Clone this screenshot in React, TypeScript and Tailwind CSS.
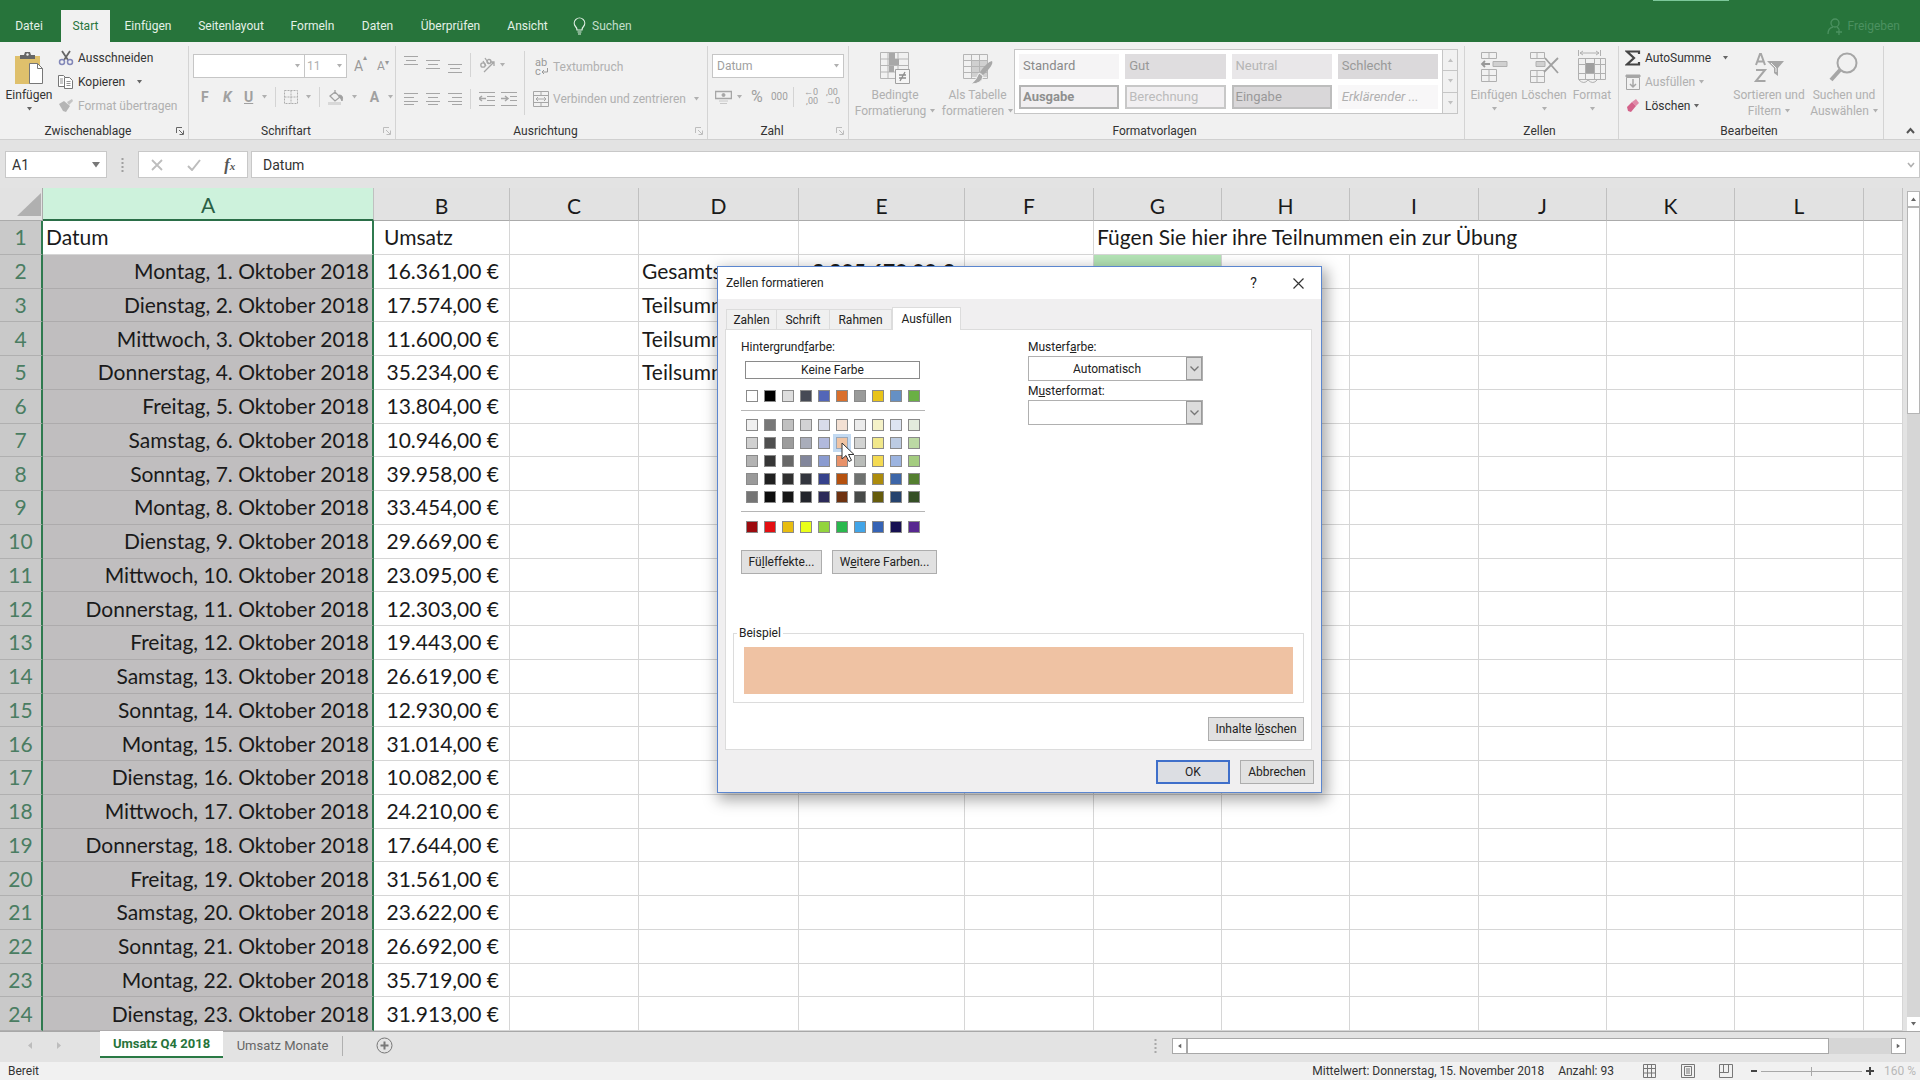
import React from "react";

const dates = [
  ["Montag, 1. Oktober 2018", "16.361,00 €"],
  ["Dienstag, 2. Oktober 2018", "17.574,00 €"],
  ["Mittwoch, 3. Oktober 2018", "11.600,00 €"],
  ["Donnerstag, 4. Oktober 2018", "35.234,00 €"],
  ["Freitag, 5. Oktober 2018", "13.804,00 €"],
  ["Samstag, 6. Oktober 2018", "10.946,00 €"],
  ["Sonntag, 7. Oktober 2018", "39.958,00 €"],
  ["Montag, 8. Oktober 2018", "33.454,00 €"],
  ["Dienstag, 9. Oktober 2018", "29.669,00 €"],
  ["Mittwoch, 10. Oktober 2018", "23.095,00 €"],
  ["Donnerstag, 11. Oktober 2018", "12.303,00 €"],
  ["Freitag, 12. Oktober 2018", "19.443,00 €"],
  ["Samstag, 13. Oktober 2018", "26.619,00 €"],
  ["Sonntag, 14. Oktober 2018", "12.930,00 €"],
  ["Montag, 15. Oktober 2018", "31.014,00 €"],
  ["Dienstag, 16. Oktober 2018", "10.082,00 €"],
  ["Mittwoch, 17. Oktober 2018", "24.210,00 €"],
  ["Donnerstag, 18. Oktober 2018", "17.644,00 €"],
  ["Freitag, 19. Oktober 2018", "31.561,00 €"],
  ["Samstag, 20. Oktober 2018", "23.622,00 €"],
  ["Sonntag, 21. Oktober 2018", "26.692,00 €"],
  ["Montag, 22. Oktober 2018", "35.719,00 €"],
  ["Dienstag, 23. Oktober 2018", "31.913,00 €"],
];

const themeRow = ["#ffffff", "#000000", "#dedede", "#464a55", "#5366b8", "#d96f2c", "#999a99", "#e8c319", "#6590c4", "#6ab044"];
const shadeRows = [
  ["#f0f0f0", "#777777", "#c0c0c0", "#d2d2d4", "#d8dcea", "#f3e0d3", "#ececec", "#f5f2c8", "#dde4f2", "#e3ebdd"],
  ["#d0d0d0", "#4f4f4f", "#9c9c9c", "#a9adba", "#b1b9dc", "#f0c4a3", "#d2d3d2", "#f1e88b", "#bccbe2", "#bcd9a4"],
  ["#b3b3b3", "#363636", "#686868", "#82869b", "#8a9bd0", "#e8926a", "#b9bcb9", "#f4da52", "#9cb4e0", "#a4cc80"],
  ["#9a9a9a", "#202020", "#303030", "#33363e", "#36428c", "#b5510f", "#6f7270", "#ac8b0c", "#3d66a8", "#547f30"],
  ["#757575", "#0d0d0d", "#161616", "#23252c", "#2c2a59", "#6e3210", "#474a48", "#665c0c", "#26436e", "#354f25"],
];
const standardRow = ["#9c0a0e", "#e30f12", "#e8bd10", "#eaff1a", "#93d43e", "#2ab84e", "#42a5e8", "#3563b5", "#171152", "#572790"];

function Caret({ className = "text-[#b0b0b0]" }: { className?: string }) {
  return (
    <svg width="5" height="4" viewBox="0 0 5 4" className={"shrink-0 " + className} aria-hidden="true">
      <path d="M0 0h5L2.5 3.5z" fill="currentColor" />
    </svg>
  );
}

function Launcher({ dim = false }: { dim?: boolean }) {
  return (
    <button aria-label="Weitere Optionen" className={dim ? "text-[#bdbdbd]" : "text-[#666]"}>
      <svg width="8" height="8" viewBox="0 0 8 8" fill="none" stroke="currentColor">
        <path d="M.5 6V.5H6M3 3l4 4M7.5 3.500v4h-4" />
      </svg>
    </button>
  );
}

function Group({ label, width, launcher, children }: { label: string; width: string; launcher?: "on" | "dim"; children: React.ReactNode }) {
  return (
    <section aria-label={label} className={"mt-1 flex flex-col border-r border-[#d4d4d4] " + width}>
      <div className="flex flex-1 pt-px">{children}</div>
      <div className="flex h-4 items-center pr-1">
        <h2 className="flex-1 text-center text-[#333]">{label}</h2>
        {launcher && <Launcher dim={launcher === "dim"} />}
      </div>
    </section>
  );
}

function Lines({ rows, className }: { rows: number[][]; className?: string }) {
  return (
    <svg width="14" height="14" viewBox="0 0 14 14" className={className} stroke="#a6a6a6" aria-hidden="true">
      {rows.map((r) => (
        <path key={r[0]} d={`M${r[1]} ${r[0]}.5H${r[2]}`} />
      ))}
    </svg>
  );
}

const tall = "flex flex-col items-center text-[#b0b0b0]";

function Ribbon() {
  return (
    <div className="flex h-[98px] border-b border-[#d0d0d0] bg-[#f1f1f1] leading-4">
      <Group label="Zwischenablage" width="w-[189px]" launcher="on">
        <button className="flex w-[58px] flex-col items-center pt-1 text-[#333]">
          <svg width="30" height="34" viewBox="0 0 30 34" aria-hidden="true">
            <path d="M1 5h25v28H1z" fill="#dfc06c" />
            <path d="M6 8V4h4l1-3h5l1 3h4v4z" fill="#666" />
            <circle cx="13.500" cy="3.500" r="1.200" fill="#f1f1f1" />
            <path d="M15.500 12.500h8l5 5v15h-13z" fill="#fff" stroke="#777" />
            <path d="M23.500 12.500v5h5" fill="none" stroke="#777" />
          </svg>
          <span className="mt-[2px]">Einfügen</span>
          <Caret className="mt-1 text-[#666]" />
        </button>
        <div className="flex flex-col gap-2 pt-[3px]">
          <button className="flex h-4 items-center gap-1 text-[#333]">
            <svg width="16" height="16" viewBox="0 0 16 16" fill="none" aria-hidden="true">
              <path d="M4 1l6 9M12 1L6 10" stroke="#666" strokeWidth="1.800" />
              <circle cx="4" cy="12" r="2.500" stroke="#8287b8" strokeWidth="1.500" />
              <circle cx="12" cy="12" r="2.500" stroke="#8287b8" strokeWidth="1.500" />
            </svg>
            Ausschneiden
          </button>
          <button className="flex h-4 items-center gap-1 text-[#333]">
            <svg width="16" height="16" viewBox="0 0 16 16" fill="#fff" stroke="#777" aria-hidden="true">
              <path d="M.5 1.500h5l3 3v8h-8z" />
              <path d="M6.500 3.500h5l3 3v8h-8z" />
              <path d="M2 5h3M2 7h3M2 9h3M8.500 7.500h4M8.500 9.500h4M8.500 11.500h4" strokeWidth=".8" />
            </svg>
            Kopieren
            <Caret className="ml-2 text-[#666]" />
          </button>
          <button className="flex h-4 items-center gap-1 text-[#b0b0b0]">
            <svg width="16" height="16" viewBox="0 0 16 16" fill="#b5b5b5" aria-hidden="true">
              <path d="M1 6l5-3 6 5-4 6-3-1z" />
              <path d="M9 4l5-3 1 2-4 4z" fill="#c4c4c4" />
            </svg>
            Format übertragen
          </button>
        </div>
      </Group>

      <Group label="Schriftart" width="w-[207px]" launcher="dim">
        <div className="flex flex-1 flex-col gap-[9px] pt-[7px] pl-1">
          <div className="flex items-center text-[#b0b0b0]">
            <button aria-label="Schriftname" className="flex h-6 w-[112px] items-center justify-end border border-[#c6c6c6] bg-white pr-1">
              <Caret />
            </button>
            <button aria-label="Schriftgrad" className="flex h-6 w-[42px] items-center justify-between border border-l-0 border-[#c6c6c6] bg-white pr-1 pl-[2px]">
              11
              <Caret />
            </button>
            <button className="ml-[7px] flex w-4 text-sm text-[#999]">
              A<span className="-mt-1 text-[8px]">▴</span>
            </button>
            <button className="ml-[7px] flex w-4 items-end text-xs text-[#999]">
              A<span className="mb-[6px] text-[8px]">▾</span>
            </button>
          </div>
          <div className="flex h-5 items-center pl-2 text-sm font-bold text-[#a0a0a0]">
            <button className="w-[22px] text-left">F</button>
            <button className="w-[21px] text-left italic">K</button>
            <button className="w-[18px] text-left underline">U</button>
            <Caret />
            <span className="mx-2 h-5 border-l border-[#d4d4d4]" />
            <button aria-label="Rahmenlinien">
              <svg width="14" height="14" viewBox="0 0 14 14" fill="none" stroke="#adadad">
                <path d="M.5.5h13v13H.5zM7 .5v13M.5 7h13" strokeDasharray="2 1" />
              </svg>
            </button>
            <span className="w-2" />
            <Caret />
            <span className="mx-2 h-5 border-l border-[#d4d4d4]" />
            <button aria-label="Füllfarbe">
              <svg width="16" height="16" viewBox="0 0 16 16" fill="none" stroke="#a0a0a0">
                <path d="M2 7l5-4 5 5-5 4zM7 5V1" strokeWidth="1.300" />
                <path d="M11 6q5 0 3 6-1-3-3-4z" fill="#a0a0a0" />
                <path d="M0 14.500h13" stroke="#d8d8d8" strokeWidth="3" />
              </svg>
            </button>
            <span className="w-2" />
            <Caret />
            <button className="w-[31px] pl-1">A</button>
            <Caret />
          </div>
        </div>
      </Group>

      <Group label="Ausrichtung" width="w-[312px]" launcher="dim">
        <div className="mt-1 mb-2 flex w-[129px] flex-col gap-[14px] border-r border-[#d4d4d4] pt-[2px] pl-2">
          <div className="flex h-6 items-center">
            <Lines className="mb-2 mr-2" rows={[[2, 0, 14], [6, 2, 12], [10, 0, 14]]} />
            <Lines className="mr-2" rows={[[2, 0, 14], [6, 2, 12], [10, 0, 14]]} />
            <Lines className="mt-2" rows={[[2, 0, 14], [6, 2, 12], [10, 0, 14]]} />
            <span className="mx-2 h-6 border-l border-[#d4d4d4]" />
            <svg width="17" height="17" viewBox="0 0 17 17" fill="none" stroke="#a6a6a6" strokeWidth="1.300" className="mr-1" aria-hidden="true">
              <circle cx="4" cy="8" r="2.200" />
              <path d="M4 4l3 5M6 1l4 6M5 15L15 5M15 9V5h-4" />
              <circle cx="10" cy="4.500" r="2" />
            </svg>
            <Caret />
          </div>
          <div className="flex h-4 items-center">
            <Lines className="mr-2" rows={[[1, 0, 14], [5, 0, 10], [9, 0, 14], [12, 0, 10]]} />
            <Lines className="mr-2" rows={[[1, 0, 14], [5, 2, 12], [9, 0, 14], [12, 2, 12]]} />
            <Lines rows={[[1, 0, 14], [5, 4, 14], [9, 0, 14], [12, 4, 14]]} />
            <span className="mx-2 h-5 border-l border-[#d4d4d4]" />
            <svg width="16" height="14" viewBox="0 0 16 14" stroke="#a6a6a6" className="mr-[6px]" aria-hidden="true">
              <path d="M0 .5h16M8 4.500h8M8 8.500h8M0 13.500h16" />
              <path d="M0 6.500h7M3 4L0 6.500 3 9" strokeWidth="1.500" fill="none" />
            </svg>
            <svg width="16" height="14" viewBox="0 0 16 14" stroke="#a6a6a6" aria-hidden="true">
              <path d="M0 .5h16M9 4.500h7M9 8.500h7M0 13.500h16" />
              <path d="M0 6.500h7M4 4l3 2.500L4 9" strokeWidth="1.500" fill="none" />
            </svg>
          </div>
        </div>
        <div className="flex flex-1 flex-col gap-4 pt-3 pl-2 text-[#b0b0b0]">
          <button className="flex h-4 items-center gap-1">
            <span className="flex w-4 flex-col items-start pl-[2px] text-[11px] leading-[9px] text-[#999]">
              <span>ab</span>
              <span className="flex items-center">
                c
                <svg width="7" height="7" viewBox="0 0 7 7" fill="none" stroke="#999" aria-hidden="true"><path d="M6.500 0v4H1M3 2L1 4l2 2" /></svg>
              </span>
            </span>
            Textumbruch
          </button>
          <button className="flex h-4 items-center gap-1">
            <svg width="16" height="16" viewBox="0 0 16 16" fill="none" stroke="#a6a6a6" aria-hidden="true">
              <path d="M.5.5h15v15H.5zM.5 4.500h15M.5 11.500h15M8 .5v4M8 11.500v4M3 8h10M5 6L3 8l2 2M11 6l2 2-2 2" />
            </svg>
            Verbinden und zentrieren
            <Caret className="ml-1 text-[#b0b0b0]" />
          </button>
        </div>
      </Group>

      <Group label="Zahl" width="w-[141px]" launcher="dim">
        <div className="flex flex-1 flex-col gap-[9px] px-1 pt-[7px] text-[#b0b0b0]">
          <button aria-label="Zahlenformat" className="flex h-6 items-center justify-between border border-[#c6c6c6] bg-white px-1 text-[#a0a0a0]">
            Datum
            <Caret />
          </button>
          <div className="flex h-5 items-center pl-[3px] text-[#a0a0a0]">
            <svg width="17" height="15" viewBox="0 0 17 15" fill="none" stroke="#a6a6a6" aria-hidden="true">
              <path d="M.5 1.500h16v7H.5z" strokeWidth="1.500" />
              <circle cx="8.500" cy="5" r="1.500" fill="#a6a6a6" />
              <path d="M4 11h9M5 13.500h7" stroke="#c8c8c8" />
            </svg>
            <span className="w-[5px]" />
            <Caret />
            <button className="ml-[9px] w-5 text-left text-base">%</button>
            <button className="w-[22px] text-left text-[10px]">000</button>
            <span className="mr-2 h-5 border-l border-[#d4d4d4]" />
            <button className="mr-2 w-4 text-right text-[9px] leading-[9px]">←0<br />,00</button>
            <button className="w-4 text-left text-[9px] leading-[9px]">,00<br />→0</button>
          </div>
        </div>
      </Group>

      <Group label="Formatvorlagen" width="flex-1">
        <button className={tall + " w-[92px] pt-1"}>
          <svg width="32" height="34" viewBox="0 0 32 34" fill="none" stroke="#b5b5b5" aria-hidden="true">
            <path d="M1.500 1.500h28v26h-28zM1.500 8h28M1.500 14.500h28M1.500 21h28M9 1.500v26M19 1.500v26" />
            <path d="M10 2h6v6h-6zM10 8h10v6H10zM10 15h5v6h-5z" fill="#a8a8a8" stroke="none" />
            <path d="M16.500 18.500h14v14h-14z" fill="#f5f5f5" stroke="#a0a0a0" />
            <path d="M20 24h7M20 27h7M26 21l-5 9" stroke="#8c8c8c" strokeWidth="1.300" />
          </svg>
          <span className="mt-[2px]">Bedingte</span>
          <span className="flex items-center gap-1 whitespace-nowrap">Formatierung <Caret /></span>
        </button>
        <button className={tall + " w-[73px] pt-1"}>
          <svg width="32" height="34" viewBox="0 0 32 34" fill="none" stroke="#b5b5b5" aria-hidden="true">
            <path d="M9 9h17v17H9z" fill="#d0d0d0" stroke="none" />
            <path d="M1.500 3.500h24v24h-24zM1.500 9.500h24M1.500 15.500h24M1.500 21.500h24M9.500 3.500v24M17.500 3.500v24" />
            <path d="M30 10q2 4-9 14l-3-3q7-10 12-11z" fill="#a8a8a8" stroke="none" />
            <path d="M17 22l4 3q-1 8-12 8 5-3 8-11z" fill="#a8a8a8" stroke="#f1f1f1" />
          </svg>
          <span className="mt-[2px]">Als Tabelle</span>
          <span className="flex items-center gap-1 whitespace-nowrap">formatieren <Caret /></span>
        </button>
        <div className="mt-[2px] mr-[6px] flex h-[65px] min-w-0 flex-1 border border-[#c6c6c6] bg-white">
          <div className="grid flex-1 grid-cols-4 grid-rows-2 gap-x-[6px] gap-y-[6px] p-1 text-[13px] text-[#999]">
            <button className="bg-[#f5f4f5] pl-1 text-left text-[#8a8a8a]">Standard</button>
            <button className="bg-[#dfdddf] pl-1 text-left">Gut</button>
            <button className="bg-[#e9e7e9] pl-1 text-left text-[#b5b5b5]">Neutral</button>
            <button className="bg-[#dbd9db] pl-1 text-left">Schlecht</button>
            <button className="border-2 border-[#b5b5b5] bg-[#f1eff1] pl-[2px] text-left font-bold text-[#8f8f8f]">Ausgabe</button>
            <button className="border-2 border-[#c8c8c8] bg-[#f1eff1] pl-[2px] text-left text-[#bbb]">Berechnung</button>
            <button className="border-2 border-[#bdbdbd] bg-[#d9d7d9] pl-[2px] text-left">Eingabe</button>
            <button className="bg-[#f8f7f8] pl-1 text-left italic text-[#b0b0b0]">Erklärender ...</button>
          </div>
          <div className="flex w-[15px] flex-col divide-y divide-[#c6c6c6] border-l border-[#c6c6c6] bg-[#f1f1f1]">
            <button aria-label="Nach oben" className="flex flex-1 items-center justify-center"><Caret className="rotate-180 text-[#c0c0c0]" /></button>
            <button aria-label="Nach unten" className="flex flex-1 items-center justify-center"><Caret className="text-[#c0c0c0]" /></button>
            <button aria-label="Alle Vorlagen" className="flex flex-1 items-center justify-center"><Caret className="text-[#c0c0c0]" /></button>
          </div>
        </div>
      </Group>

      <Group label="Zellen" width="w-[154px]">
        <button className={tall + " w-[54px] pt-[3px] pl-1"}>
          <svg width="28" height="34" viewBox="0 0 28 34" fill="none" stroke="#b0b0b0" aria-hidden="true">
            <path d="M1.500 2.500h15v6h-15zM9 2.500v6M1.500 19.500h15v12h-15zM9 19.500v12M1.500 25.500h15" />
            <path d="M13 11.500h14v5H13z" fill="#d0d0d0" />
            <path d="M10 14H2M5 11l-3 3 3 3" strokeWidth="1.800" stroke="#999" />
          </svg>
          <span className="mt-[3px]">Einfügen</span>
          <Caret className="mt-1 text-[#b0b0b0]" />
        </button>
        <button className={tall + " w-[50px] pt-[3px]"}>
          <svg width="30" height="34" viewBox="0 0 30 34" fill="none" stroke="#b0b0b0" aria-hidden="true">
            <path d="M1.500 2.500h14v6h-14zM8 2.500v6M1.500 20.500h14v12h-14zM8 20.500v12M1.500 26.500h14" />
            <path d="M7 11.500h9v5H7z" fill="#d0d0d0" />
            <path d="M16 8l13 15M29 8L15 22" strokeWidth="1.800" stroke="#a0a0a0" />
          </svg>
          <span className="mt-[3px]">Löschen</span>
          <Caret className="mt-1 text-[#b0b0b0]" />
        </button>
        <button className={tall + " w-[46px] pt-[3px]"}>
          <svg width="30" height="34" viewBox="0 0 30 34" fill="none" stroke="#b0b0b0" aria-hidden="true">
            <path d="M1.500 0v6M23.500 0v6M3 3h19M6 1L3 3l3 2M19 1l3 2-3 2" />
            <path d="M1.500 8.500h27v21h-27zM8.500 8.500v21M17.500 8.500v21M23.500 8.500v21M1.500 14.500h27M1.500 23.500h27M2 30q5 5 9 0 5 5 9 0" />
            <path d="M9 13h8v10H9z" fill="#a0a0a0" stroke="none" />
          </svg>
          <span className="mt-[3px]">Format</span>
          <Caret className="mt-1 text-[#b0b0b0]" />
        </button>
      </Group>

      <Group label="Bearbeiten" width="w-[265px]">
        <div className="flex w-[111px] flex-col gap-2 pt-[3px] pl-[6px]">
          <button className="flex h-4 items-center gap-1 text-[#333]">
            <svg width="16" height="16" viewBox="0 0 16 16" fill="none" stroke="#444" strokeWidth="2.200" aria-hidden="true">
              <path d="M14 4V1.500H2L9 8l-7 6.500h12V12" />
            </svg>
            AutoSumme
            <Caret className="ml-2 text-[#666]" />
          </button>
          <button className="flex h-4 items-center gap-1 text-[#b0b0b0]">
            <svg width="16" height="16" viewBox="0 0 16 16" fill="none" stroke="#a6a6a6" aria-hidden="true">
              <path d="M1 1h14v2H1z" fill="#a6a6a6" />
              <path d="M1.500 3.500h13v12h-13z" />
              <path d="M8 5v8M5 10l3 3 3-3" strokeWidth="1.500" />
            </svg>
            Ausfüllen
            <Caret />
          </button>
          <button className="flex h-4 items-center gap-1 text-[#333]">
            <svg width="16" height="16" viewBox="0 0 16 16" aria-hidden="true">
              <path d="M7 4l4-3 3 4-3 3z" fill="#e08aa8" />
              <path d="M2 9l5-5 4 4-5 6-3-1z" fill="#d4628a" />
            </svg>
            Löschen
            <Caret className="text-[#666]" />
          </button>
        </div>
        <button className={tall + " w-[78px] pt-1"}>
          <svg width="32" height="34" viewBox="0 0 32 34" fill="none" stroke="#a6a6a6" strokeWidth="2" aria-hidden="true">
            <path d="M3 14L7 3h1l4 11M4.500 10.500h6M3 19h9L3 30h9.500" />
            <path d="M14 10h17l-6 7v8l-4-3v-5z" fill="#a6a6a6" stroke="none" />
            <path d="M18 12l5 5v4" stroke="#f1f1f1" strokeWidth="1" />
          </svg>
          <span className="mt-[2px] whitespace-nowrap">Sortieren und</span>
          <span className="flex items-center gap-1">Filtern <Caret /></span>
        </button>
        <button className={tall + " w-[72px] pt-1"}>
          <svg width="32" height="34" viewBox="0 0 32 34" fill="none" stroke="#a6a6a6" aria-hidden="true">
            <circle cx="19" cy="12" r="9.500" strokeWidth="2" />
            <path d="M12 19L3 29" strokeWidth="4" />
          </svg>
          <span className="mt-[2px] whitespace-nowrap">Suchen und</span>
          <span className="flex items-center gap-1">Auswählen <Caret /></span>
        </button>
      </Group>
      <div className="flex w-9 items-end justify-end pr-[5px] pb-1">
        <button aria-label="Menüband reduzieren">
          <svg width="9" height="8" viewBox="0 0 9 8" fill="none" stroke="#555" strokeWidth="2">
            <path d="M1 6l3.500-4L8 6" />
          </svg>
        </button>
      </div>
    </div>
  );
}

function Swatches({ colors, picked = -1 }: { colors: string[]; picked?: number }) {
  return (
    <div className="flex gap-[6px] pl-[5px]">
      {colors.map((c, i) => (
        <button
          key={c}
          aria-label={"Farbe " + c}
          style={{ backgroundColor: c }}
          className={i === picked ? "relative size-3 border border-[#9aa7b8] ring-3 ring-[#c3daf2]" : "size-3 border border-[#8a8a8a]"}
        >
          {i === picked && (
            <svg width="14" height="21" viewBox="0 0 14 21" className="absolute top-1 left-1 z-10" aria-hidden="true">
              <path d="M1 1v16l4-3.500 3 6 2.500-1.200-3-5.800H13z" fill="#fff" stroke="#333" />
            </svg>
          )}
        </button>
      ))}
    </div>
  );
}

const dlgButton = "h-6 border border-[#adadad] bg-[#e1e1e1] text-center";

function Combo({ label, id, value, top }: { label: React.ReactNode; id: string; value: string; top: string }) {
  return (
    <div className={top}>
      <label htmlFor={id} className="block leading-4">{label}</label>
      <div className="mt-[1px] flex h-[25px] border border-[#b0b0b0] bg-white">
        <select id={id} className="min-w-0 flex-1 appearance-none pl-[44px] outline-none">
          <option>{value}</option>
        </select>
        <span className="pointer-events-none flex w-4 items-center justify-center border border-[#9a9a9a] bg-[#dcdcdc]">
          <svg width="9" height="6" viewBox="0 0 9 6" fill="none" stroke="#777" strokeWidth="1.300">
            <path d="M.5.5l4 4 4-4" />
          </svg>
        </span>
      </div>
    </div>
  );
}

function FormatDialog() {
  return (
    <div role="dialog" aria-label="Zellen formatieren" className="absolute top-[266px] left-[717px] flex w-[605px] flex-col border border-[#5b86cf] bg-[#f0eff0] text-[#222] shadow-[3px_5px_14px_2px_rgba(0,0,0,0.35)]">
      <div className="flex h-8 items-center bg-white pl-2">
        <h1 className="flex-1">Zellen formatieren</h1>
        <button className="w-[45px] text-sm">?</button>
        <button aria-label="Schließen" className="flex w-[45px] justify-center">
          <svg width="11" height="11" viewBox="0 0 11 11" stroke="#333" strokeWidth="1.200"><path d="M.5.5l10 10M10.500.5l-10 10" /></svg>
        </button>
      </div>
      <div className="flex h-[30px] items-end pl-2">
        <button className="h-5 w-[51px] border border-b-0 border-[#dcdcdc] bg-[#f0f0f0]">Zahlen</button>
        <button className="h-5 w-[53px] border border-b-0 border-l-0 border-[#dcdcdc] bg-[#f0f0f0]">Schrift</button>
        <button className="h-5 w-[62px] border border-b-0 border-l-0 border-[#dcdcdc] bg-[#f0f0f0]">Rahmen</button>
        <button className="z-10 -mb-px h-[23px] w-[69px] border border-b-0 border-[#dcdcdc] bg-white pb-px">Ausfüllen</button>
      </div>
      <div className="mr-[9px] ml-[7px] flex flex-col border border-[#dcdcdc] bg-white pt-[9px] pb-2">
        <div className="flex h-[286px] pl-[15px]">
          <div className="w-[287px]">
            <div className="leading-4">Hintergrund<u>f</u>arbe:</div>
            <div className="w-[184px]">
              <button className="mt-[6px] mb-[11px] ml-1 block h-[18px] w-[175px] border border-[#8a8a8a] bg-white leading-4">Keine Farbe</button>
              <Swatches colors={themeRow} />
              <div className="my-2 border-t border-[#b5b5b5]" />
              <div className="flex flex-col gap-[6px]">
                {shadeRows.map((row, i) => (
                  <Swatches key={i} colors={row} picked={i === 1 ? 5 : -1} />
                ))}
              </div>
              <div className="mt-2 mb-[9px] border-t border-[#b5b5b5]" />
              <Swatches colors={standardRow} />
            </div>
            <div className="mt-[17px] flex gap-[10px]">
              <button className={dlgButton + " w-[81px]"}>Fü<u>l</u>leffekte...</button>
              <button className={dlgButton + " w-[105px]"}>W<u>e</u>itere Farben...</button>
            </div>
          </div>
          <div className="w-[175px]">
            <Combo id="musterfarbe" label={<>Musterf<u>a</u>rbe:</>} value="Automatisch" top="" />
            <Combo id="musterformat" label={<>M<u>u</u>sterformat:</>} value="" top="mt-[2px]" />
          </div>
        </div>
        <fieldset className="mr-[7px] ml-[7px] border border-[#dcdcdc] px-[10px] pb-2">
          <legend className="-ml-[7px] px-[2px] leading-4">Beispiel</legend>
          <div className="mt-[6px] h-[47px] bg-[#efc2a3]" />
        </fieldset>
        <button className={dlgButton + " mt-[14px] mr-[7px] w-24 self-end"}>Inhalte l<u>ö</u>schen</button>
      </div>
      <div className="flex justify-end gap-[10px] pt-[10px] pr-[7px] pb-2">
        <button className="h-6 w-[74px] border-2 border-[#3f6fca] bg-[#dcdee3]">OK</button>
        <button className={dlgButton + " w-[74px]"}>Abbrechen</button>
      </div>
    </div>
  );
}

const cell = "border-r border-b border-[#d6d6d6]";
const letters = ["C", "D", "E", "F", "G", "H", "I", "J", "K", "L", ""];

function Sheet() {
  return (
    <table className="h-full flex-1 table-fixed border-separate border-spacing-0 bg-white font-[Lato,sans-serif] text-[21px] leading-7 whitespace-nowrap text-[#1a1a1a]">
      <colgroup>
        <col className="w-[43px]" />
        <col className="w-[331px]" />
        <col className="w-[136px]" />
        <col className="w-[129px]" />
        <col className="w-[160px]" />
        <col className="w-[166px]" />
        <col className="w-[129px]" />
        <col className="w-[128px]" />
        <col className="w-[128px]" />
        <col className="w-[129px]" />
        <col className="w-[128px]" />
        <col className="w-[128px]" />
        <col className="w-[129px]" />
        <col />
      </colgroup>
      <thead>
        <tr className="h-8 bg-[#e2e2e2]">
          <th className="border-r border-b border-[#ababab] p-0">
            <svg width="24" height="23" viewBox="0 0 24 23" className="ml-auto mr-px" aria-hidden="true"><path d="M24 0v23H0z" fill="#b0b0b0" /></svg>
          </th>
          <th className="border-r border-b-2 border-r-[#c0c0c0] border-b-[#2a6e47] bg-[#cdf2dc] p-0 pt-[3px] font-normal text-[#2b6044]">A</th>
          <th className="border-r border-b border-r-[#c0c0c0] border-b-[#ababab] p-0 pt-[3px] font-normal">B</th>
          {letters.map((l) => (
            <th key={l} className="border-r border-b border-r-[#c0c0c0] border-b-[#ababab] p-0 pt-[3px] font-normal">{l}</th>
          ))}
        </tr>
      </thead>
      <tbody>
        <tr>
          <th className="border-r-2 border-b border-r-[#2f7a4f] border-b-[#b0b0b0] bg-[#c9c9c9] p-0 font-normal text-[#4a7d62]">1</th>
          <td className="border-r-2 border-b border-r-[#2f7a4f] border-b-[#d6d6d6] p-0 pl-[3px]">Datum</td>
          <td className={cell + " p-0 pl-[10px]"}>Umsatz</td>
          <td className={cell} /><td className={cell} /><td className={cell} /><td className={cell} />
          <td colSpan={4} className={cell + " p-0 pl-[3px]"}>Fügen Sie hier ihre Teilnummen ein zur Übung</td>
          <td className={cell} /><td className={cell} /><td className={cell} />
        </tr>
        {dates.map(([d, v], i) => (
          <tr key={d}>
            <th className="border-r-2 border-b border-r-[#2f7a4f] border-b-[#b0b0b0] bg-[#c9c9c9] p-0 font-normal text-[#4a7d62]">{i + 2}</th>
            <td className="border-r-2 border-b border-r-[#2f7a4f] border-b-[#adabac] bg-[#c0bebf] p-0 pr-[3px] text-right">{d}</td>
            <td className={cell + " p-0 pr-[10px] text-right"}>{v}</td>
            <td className={cell} />
            <td className={cell + " p-0 pl-[3px]"}>{i === 0 ? "Gesamtsumme" : i < 4 ? "Teilsumme " + i : ""}</td>
            <td className={cell + " p-0 pr-[10px] text-right font-bold"}>{i === 0 ? "2.205.670,00 €" : ""}</td>
            <td className={cell} />
            <td className={i === 0 ? cell + " bg-[#b3e3b5]" : cell} />
            <td className={cell} /><td className={cell} /><td className={cell} />
            <td className={cell} /><td className={cell} /><td className={cell} />
          </tr>
        ))}
      </tbody>
    </table>
  );
}

export default function App() {
  return (
    <div className="relative flex h-screen flex-col overflow-hidden bg-[#e3e3e3] font-[Roboto,sans-serif] text-xs text-[#333]">
      <header className="relative flex h-[42px] items-end bg-[#27743b] text-[#e4f1e7]">
        <div className="absolute top-0 right-[191px] h-px w-[76px] bg-[#7cc79a]" />
        <nav className="flex h-8 flex-1 items-center">
          <button className="h-8 w-[61px] pr-[3px]">Datei</button>
          <button className="h-8 w-[49px] bg-[#f1f1f1] text-[#27743b]">Start</button>
          <button className="w-[76px]">Einfügen</button>
          <button className="w-[90px]">Seitenlayout</button>
          <button className="w-[73px]">Formeln</button>
          <button className="w-[57px]">Daten</button>
          <button className="w-[89px]">Überprüfen</button>
          <button className="w-[65px]">Ansicht</button>
          <button className="ml-[13px] flex items-center gap-[6px] text-[#c3dfca]">
            <svg width="13" height="18" viewBox="0 0 13 18" fill="none" stroke="#e4f1e7" strokeWidth="1.200" aria-hidden="true">
              <path d="M4 13q0-2-1.500-3.500a5.200 5.200 0 118 0Q9 11 9 13zM4.500 15h4M5 17h3" />
            </svg>
            Suchen
          </button>
        </nav>
        <button className="mr-5 flex h-8 items-center gap-1 text-[#4b9160]">
          <svg width="16" height="17" viewBox="0 0 16 17" fill="none" stroke="currentColor" strokeWidth="1.300" aria-hidden="true">
            <circle cx="8" cy="5" r="4" />
            <path d="M1 16q0-6 5-7M10 9l2 2M12 11v6M9 14h6" />
          </svg>
          Freigeben
        </button>
      </header>

      <Ribbon />

      <div className="flex h-12 items-center pt-px text-sm">
        <button className="ml-[5px] flex h-[27px] w-[102px] items-center justify-between border border-[#c8c8c8] bg-white px-[6px]">
          A1
          <svg width="8" height="6" viewBox="0 0 8 6" aria-hidden="true"><path d="M0 0h8L4 5.500z" fill="#777" /></svg>
        </button>
        <svg width="3" height="14" viewBox="0 0 3 14" className="mx-[14px]" fill="#a0a0a0" aria-hidden="true">
          <path d="M.5 0h2v2h-2zM.5 4h2v2h-2zM.5 8h2v2h-2zM.5 12h2v2h-2z" />
        </svg>
        <div className="flex h-[27px] w-[110px] items-center justify-around border border-[#c8c8c8] bg-white">
          <svg width="12" height="12" viewBox="0 0 12 12" stroke="#bdbdbd" strokeWidth="1.800" aria-hidden="true"><path d="M1 1l10 10M11 1L1 11" /></svg>
          <svg width="14" height="12" viewBox="0 0 14 12" fill="none" stroke="#bdbdbd" strokeWidth="2" aria-hidden="true"><path d="M1 7l4 4 8-10" /></svg>
          <button aria-label="Funktion einfügen" className="font-[Liberation_Serif,serif] text-base font-bold text-[#555] italic">f<span className="text-[11px]">x</span></button>
        </div>
        <div className="ml-[3px] flex h-[27px] flex-1 items-center border border-[#c8c8c8] bg-white pr-1 pl-[11px]">
          <input aria-label="Bearbeitungsleiste" defaultValue="Datum" className="flex-1 bg-transparent outline-none" />
          <svg width="8" height="6" viewBox="0 0 8 6" fill="none" stroke="#b0b0b0" strokeWidth="1.600" aria-hidden="true"><path d="M1 1l3 3.500L7 1" /></svg>
        </div>
      </div>

      <div className="flex min-h-0 flex-1">
        <Sheet />
        <div className="mt-[3px] ml-1 flex w-[13px] flex-col bg-[#d6d6d6]">
          <button aria-label="Nach oben" className="flex h-4 items-center justify-center border border-[#b5b5b5] bg-white">
            <Caret className="rotate-180 text-[#666]" />
          </button>
          <div className="h-[207px] border border-[#b5b5b5] bg-white" />
          <button aria-label="Nach unten" className="mt-auto flex h-[14px] items-center justify-center bg-white">
            <Caret className="text-[#666]" />
          </button>
        </div>
      </div>

      <div className="flex h-[31px] border-t border-[#a8a8a8] bg-[#e3e3e3]">
        <div className="flex h-[27px] w-[100px] items-center gap-[24px] pl-7">
          <svg width="5" height="7" viewBox="0 0 5 7" aria-hidden="true"><path d="M4 0v7L0 3.500z" fill="#bdbdbd" /></svg>
          <svg width="5" height="7" viewBox="0 0 5 7" aria-hidden="true"><path d="M0 0v7l4-3.500z" fill="#bdbdbd" /></svg>
        </div>
        <button className="-mt-px h-[27px] w-[123px] border-b-2 border-[#2a7a45] bg-white text-[13px] font-bold text-[#27743b]">Umsatz Q4 2018</button>
        <button className="my-1 h-5 w-[120px] border-r border-[#b0b0b0] text-[13px] text-[#666]">Umsatz Monate</button>
        <button aria-label="Neues Blatt" className="ml-[33px] flex h-[27px] items-center">
          <svg width="17" height="17" viewBox="0 0 17 17" fill="none" stroke="#777">
            <circle cx="8.500" cy="8.500" r="7.500" />
            <path d="M8.500 4.500v8M4.500 8.500h8" strokeWidth="2" />
          </svg>
        </button>
        <div className="flex-1" />
        <svg width="3" height="14" viewBox="0 0 3 14" className="mt-[7px] mr-[15px]" fill="#a8a8a8" aria-hidden="true">
          <path d="M.5 0h2v2h-2zM.5 4h2v2h-2zM.5 8h2v2h-2zM.5 12h2v2h-2z" />
        </svg>
        <div className="mt-[6px] mr-[14px] flex h-4 w-[734px] bg-[#d6d6d6]">
          <button aria-label="Nach links" className="flex w-[15px] items-center justify-center border border-[#a8a8a8] bg-white">
            <Caret className="rotate-90 text-[#666]" />
          </button>
          <div className="flex-1 border border-[#a8a8a8] bg-white" />
          <div className="w-[62px]" />
          <button aria-label="Nach rechts" className="flex w-[15px] items-center justify-center border border-[#a8a8a8] bg-white">
            <Caret className="-rotate-90 text-[#666]" />
          </button>
        </div>
      </div>

      <footer className="flex h-[18px] items-center bg-[#f1f1f1] pr-1 pl-2 leading-4">
        <span className="flex-1">Bereit</span>
        <span className="mr-[14px]">Mittelwert: Donnerstag, 15. November 2018</span>
        <span className="mr-[29px]">Anzahl: 93</span>
        <svg width="13" height="14" viewBox="0 0 13 14" fill="none" stroke="#777" className="mr-[25px]" aria-hidden="true">
          <path d="M.5.5h12v13H.5zM4.500.5v13M8.500.5v13M.5 4.500h12M.5 9h12" />
        </svg>
        <svg width="14" height="14" viewBox="0 0 14 14" fill="none" stroke="#777" className="mr-6" aria-hidden="true">
          <path d="M.5.5h13v13H.5zM3.500 2.500h7v9h-7zM5 5h4M5 7h4M5 9h4" />
        </svg>
        <svg width="14" height="14" viewBox="0 0 14 14" fill="none" stroke="#777" className="mr-[18px]" aria-hidden="true">
          <path d="M.5.5h13v13H.5zM4.500.5v8M9.500.5v8M.5 8.500h9" />
        </svg>
        <button aria-label="Verkleinern" className="h-[2px] w-[6px] bg-[#444]" />
        <svg width="101" height="9" viewBox="0 0 101 9" className="mx-1" stroke="#a8a8a8" aria-hidden="true"><path d="M0 4.500h101M50.500 0v9" /></svg>
        <button aria-label="Vergrößern">
          <svg width="8" height="8" viewBox="0 0 8 8" stroke="#444" strokeWidth="2"><path d="M0 4h8M4 0v8" /></svg>
        </button>
        <span className="ml-[10px] whitespace-nowrap text-[#b8b8b8]">160 %</span>
      </footer>

      <FormatDialog />
    </div>
  );
}
